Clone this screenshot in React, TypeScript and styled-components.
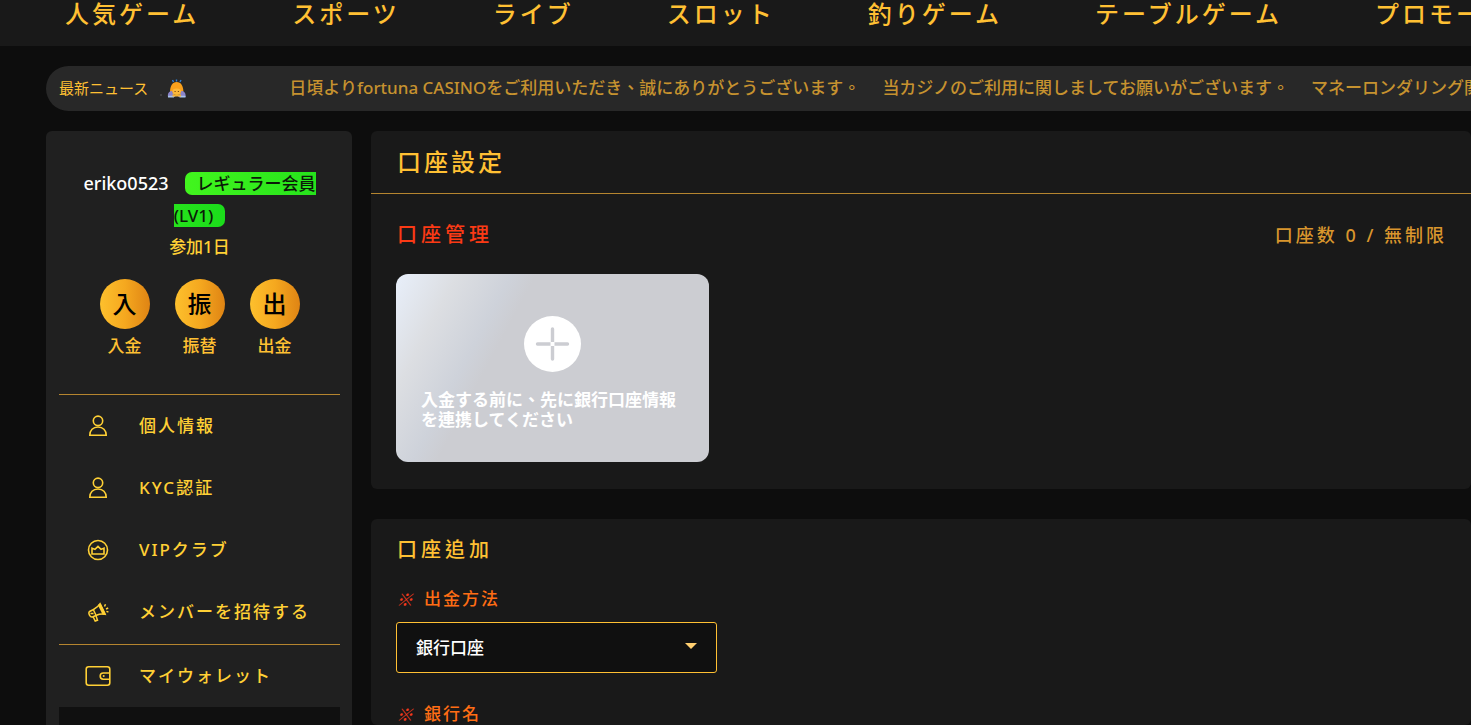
import React from 'react';
import styled, { createGlobalStyle } from 'styled-components';

const gold = '#ffc033';
const lemon = '#ffd035';
const line = '#b5852f';

const GlobalStyle = createGlobalStyle`
  *, *::before, *::after { box-sizing: border-box; }
  body {
    margin: 0;
    background: #0d0d0d;
    color: ${gold};
    font-family: "Noto Sans", "Noto Sans CJK TC", sans-serif;
    font-size: 17px;
    font-weight: 500;
    line-height: 22px;
  }
  a { color: inherit; text-decoration: none; }
  button, select { font: inherit; }
  h1, h2, p, ul { margin: 0; padding: 0; }
  ul { list-style: none; }
`;

const Page = styled.div`
  display: flex;
  flex-direction: column;
  min-height: 100vh;
  overflow: hidden;
`;

const TopNav = styled.nav`
  display: flex;
  gap: 93px;
  padding: 0 0 18px 65px;
  background: #191919;
`;

const NavLink = styled.a`
  flex: none;
  font-size: 24px;
  line-height: 28px;
  letter-spacing: 3px;
  white-space: nowrap;
`;

const NewsBar = styled.section`
  display: flex;
  align-items: center;
  height: 45px;
  margin: 20px 0 20px 46px;
  padding: 0 0 2px 13px;
  border-radius: 23px 0 0 23px;
  background: #282828;
`;

const NewsLabel = styled.span`
  flex: none;
  font-size: 15px;
  font-weight: 400;
`;

const NewsIcon = styled.svg`
  flex: none;
  width: 28px;
  height: 20px;
  margin: 3px 101px 0 12px;
`;

const Ticker = styled.div`
  display: flex;
  gap: 22px;
  flex: none;
  color: #c6922f;
  white-space: nowrap;
`;

const Columns = styled.div`
  display: flex;
  flex: 1;
  gap: 19px;
  padding-left: 46px;
`;

const Sidebar = styled.aside`
  display: flex;
  flex-direction: column;
  flex: none;
  width: 306px;
  padding: 36px 12px 0 13px;
  border-radius: 6px 6px 0 0;
  background: #202020;
`;

const Profile = styled.div`
  padding: 0 20px;
  line-height: 32px;
  text-align: center;
`;

const UserName = styled.span`
  margin-right: 16px;
  color: #fff;
  font-size: 18px;
`;

const LevelBadge = styled.span`
  padding: 0 12px;
  border-radius: 7px;
  background: linear-gradient(90deg, #42f51e, #1bdc1b);
  color: #0b1a08;
`;

const Joined = styled.p`
  line-height: 30px;
  color: ${lemon};
`;

const Shortcuts = styled.div`
  display: flex;
  justify-content: center;
  gap: 25px;
  margin: 17px 0 37px;
`;

const Shortcut = styled.button`
  display: flex;
  flex-direction: column;
  align-items: center;
  gap: 6px;
  width: 50px;
  padding: 0;
  border: 0;
  background: none;
  color: ${gold};
  white-space: nowrap;
`;

const ShortcutDisc = styled.span`
  display: flex;
  align-items: center;
  justify-content: center;
  width: 50px;
  height: 50px;
  border-radius: 50%;
  background: linear-gradient(90deg, #fdc02d, #f5a81f 50%, #df8414);
  color: #000;
  font-size: 24px;
`;

const Menu = styled.ul`
  border-top: 1px solid ${line};

  & + & {
    margin-top: 1px;
  }
`;

const MenuLink = styled.a`
  display: flex;
  align-items: center;
  gap: 28px;
  height: 62px;
  padding-left: 26px;
  color: ${lemon};
  letter-spacing: 2px;
`;

const MenuIcon = styled.svg`
  width: 26px;
  height: 26px;
  fill: none;
  stroke: currentColor;
`;

const SubMenu = styled.div`
  flex: 1;
  background: #101010;
`;

const Main = styled.main`
  display: flex;
  flex-direction: column;
  flex: 1;
  gap: 30px;
  min-width: 0;
`;

const Panel = styled.section<{ $grow?: boolean }>`
  flex: ${(p) => (p.$grow ? '1' : 'none')};
  border-radius: 6px;
  background: #191919;
`;

const PanelTitle = styled.h1`
  padding: 15px 26px 16px;
  border-bottom: 1px solid ${line};
  font-size: 24px;
  font-weight: 500;
  line-height: 31px;
  letter-spacing: 3px;
`;

const PanelBody = styled.div`
  padding: 26px 24px 27px 25px;
`;

const Heading = styled.div`
  display: flex;
  align-items: center;
  justify-content: space-between;
  margin-bottom: 24px;
`;

const SubTitle = styled.h2<{ $alert?: boolean }>`
  padding-left: 1px;
  color: ${(p) => (p.$alert ? '#fb3a15' : gold)};
  font-size: 20px;
  font-weight: 500;
  line-height: 30px;
  letter-spacing: 4px;
`;

const Count = styled.span`
  color: #d9962d;
  font-size: 18px;
  letter-spacing: 3px;
`;

const AddCard = styled.button`
  display: flex;
  flex-direction: column;
  align-items: center;
  gap: 18px;
  width: 313px;
  height: 188px;
  padding: 42px 25px 0;
  border: 0;
  border-radius: 12px;
  background: linear-gradient(118deg, #e8effa, #dcdee2 15%, #ced2da 28%, #cccdd2 34%);
  color: #fff;
  font-weight: 700;
  line-height: 20px;
  text-align: left;
`;

const PlusIcon = styled.svg`
  flex: none;
  width: 57px;
  height: 56px;
`;

const Form = styled.form`
  display: flex;
  flex-direction: column;
  align-items: flex-start;
  padding: 16px 25px 0;
`;

const FieldLabel = styled.label`
  display: flex;
  align-items: center;
  height: 20px;
  margin-top: 24px;
  color: #ff6d14;
  letter-spacing: 2px;
  line-height: 20px;
`;

const Mark = styled.i`
  width: 28px;
  color: #f23a1c;
  font-family: "Noto Sans CJK TC", sans-serif;
  font-style: oblique;
  font-weight: 400;
`;

const SelectBox = styled.div`
  position: relative;
  width: 321px;
  margin: 13px 0 7px;
`;

const Select = styled.select`
  display: block;
  width: 100%;
  height: 51px;
  padding: 0 19px;
  border: 1px solid ${gold};
  border-radius: 3px;
  background: #101010;
  color: #fff;
  appearance: none;
`;

const Caret = styled.svg`
  position: absolute;
  top: 21px;
  right: 20px;
  width: 12px;
  height: 6px;
  pointer-events: none;
`;

const navItems = ['人気ゲーム', 'スポーツ', 'ライブ', 'スロット', '釣りゲーム', 'テーブルゲーム', 'プロモーション'];

const news = [
  '日頃よりfortuna CASINOをご利用いただき、誠にありがとうございます。',
  '当カジノのご利用に関しましてお願いがございます。',
  'マネーロンダリング関連の対策を強化しております。',
];

const shortcuts = [
  ['入', '入金'],
  ['振', '振替'],
  ['出', '出金'],
];

const UserIcon = () => (
  <MenuIcon viewBox="0 0 26 26" strokeWidth="1.6">
    <circle cx="13" cy="7.8" r="4.7" />
    <path d="M4.8 22.2c0-4.8 3.2-8.2 8.2-8.2s8.2 3.4 8.2 8.2z" />
  </MenuIcon>
);

const CrownIcon = () => (
  <MenuIcon viewBox="0 0 26 26" strokeWidth="1.6">
    <circle cx="13" cy="13" r="9.5" />
    <path d="M7 17v-5.800l3 1.200 3-3 3 3 3-1.200v5.800z" />
  </MenuIcon>
);

const MegaphoneIcon = () => (
  <MenuIcon viewBox="0 0 26 26" strokeWidth="1.5">
    <path d="M4.5 12.5l4-2c3-1.500 5-3.200 6.600-5.800l5 10.500c-3-.6-5.600-.4-8.600 1l-4 1.800c-2.500.6-4.600-4-3-5.500z" />
    <path d="M14.3 5.2l4.900 10" strokeWidth="3.2" />
    <path d="M8.5 11l2.400 5M8 17.500l2.200 4.500 2.300-.8-1.500-4.500M5.500 14.500h3" />
    <path d="M19.5 7.500l1-2.200M21 10l2.200-1M21.400 12.400l2 .6" />
  </MenuIcon>
);

const WalletIcon = () => (
  <MenuIcon viewBox="0 0 26 26" strokeWidth="1.6">
    <rect x="1.2" y="3.7" width="23.6" height="18.6" rx="2.5" />
    <path d="M24.5 10h-6.200a3 3 0 0 0 0 6.200h6.200" />
    <circle cx="18.7" cy="13.1" r="1" fill="currentColor" stroke="none" />
  </MenuIcon>
);

const accountMenu = [
  { label: '個人情報', Icon: UserIcon },
  { label: 'KYC認証', Icon: UserIcon },
  { label: 'VIPクラブ', Icon: CrownIcon },
  { label: 'メンバーを招待する', Icon: MegaphoneIcon },
];

export default function App() {
  return (
    <>
      <GlobalStyle />
      <Page>
        <TopNav>
          {navItems.map((item) => (
            <NavLink href="#" key={item}>{item}</NavLink>
          ))}
        </TopNav>
        <NewsBar>
          <NewsLabel>最新ニュース</NewsLabel>
          <NewsIcon viewBox="0 0 28 20" aria-hidden="true">
            <path d="M.5 15.5h1v1h-1z" fill="#8a8a8a" />
            <path d="M12.5 1l1 2M16.5 .5v2M21 1l-1 2" stroke="#2f7fd6" strokeWidth="1.4" />
            <path d="M10 13c0-6 2.500-10 6.700-10s6.700 4 6.700 10z" fill="#f8a01c" />
            <path d="M8 18c-.6-3.500 1-6 4-6l3.500 6zM25.500 18c.6-3.500-1-6-4-6l-3.500 6z" fill="#8b84c9" />
            <ellipse cx="16.7" cy="12.8" rx="4.3" ry="3.2" fill="#fcb83a" />
            <path d="M14.5 12.5h1.200M17.800 12.500h1.200" stroke="#7a4a12" strokeWidth="1" />
            <path d="M8 16.800h6v1.700h-6zM19.500 16.800h6v1.700h-6z" fill="#a9c4ee" />
            <path d="M12.5 15.500h8.500v2h-8.500z" fill="#f3b02f" />
          </NewsIcon>
          <Ticker>
            {news.map((text) => (
              <span key={text}>{text}</span>
            ))}
          </Ticker>
        </NewsBar>
        <Columns>
          <Sidebar>
            <Profile>
              <UserName>eriko0523</UserName>
              <LevelBadge>レギュラー会員(LV1)</LevelBadge>
              <Joined>参加1日</Joined>
            </Profile>
            <Shortcuts>
              {shortcuts.map(([glyph, label]) => (
                <Shortcut type="button" key={label}>
                  <ShortcutDisc>{glyph}</ShortcutDisc>
                  {label}
                </Shortcut>
              ))}
            </Shortcuts>
            <Menu>
              {accountMenu.map(({ label, Icon }) => (
                <li key={label}>
                  <MenuLink href="#"><Icon />{label}</MenuLink>
                </li>
              ))}
            </Menu>
            <Menu>
              <li>
                <MenuLink href="#"><WalletIcon />マイウォレット</MenuLink>
              </li>
            </Menu>
            <SubMenu />
          </Sidebar>
          <Main>
            <Panel>
              <PanelTitle>口座設定</PanelTitle>
              <PanelBody>
                <Heading>
                  <SubTitle $alert>口座管理</SubTitle>
                  <Count>口座数 0 / 無制限</Count>
                </Heading>
                <AddCard type="button">
                  <PlusIcon viewBox="0 0 57 56" aria-hidden="true">
                    <ellipse cx="28.5" cy="28" rx="28.5" ry="28" fill="#fff" />
                    <path d="M28.5 13v13M28.500 30v13M13.500 28h13M30.500 28h13" stroke="#cccdd2" strokeWidth="3.4" strokeLinecap="round" />
                    <path d="M26.5 26h4v4h-4z" fill="#fff" />
                  </PlusIcon>
                  入金する前に、先に銀行口座情報を連携してください
                </AddCard>
              </PanelBody>
            </Panel>
            <Panel $grow>
              <Form>
                <SubTitle>口座追加</SubTitle>
                <FieldLabel htmlFor="method"><Mark>※</Mark>出金方法</FieldLabel>
                <SelectBox>
                  <Select id="method">
                    <option>銀行口座</option>
                  </Select>
                  <Caret viewBox="0 0 12 6" aria-hidden="true">
                    <path d="M0 0h12l-6 6z" fill="#ffcf70" />
                  </Caret>
                </SelectBox>
                <FieldLabel as="span"><Mark>※</Mark>銀行名</FieldLabel>
              </Form>
            </Panel>
          </Main>
        </Columns>
      </Page>
    </>
  );
}
